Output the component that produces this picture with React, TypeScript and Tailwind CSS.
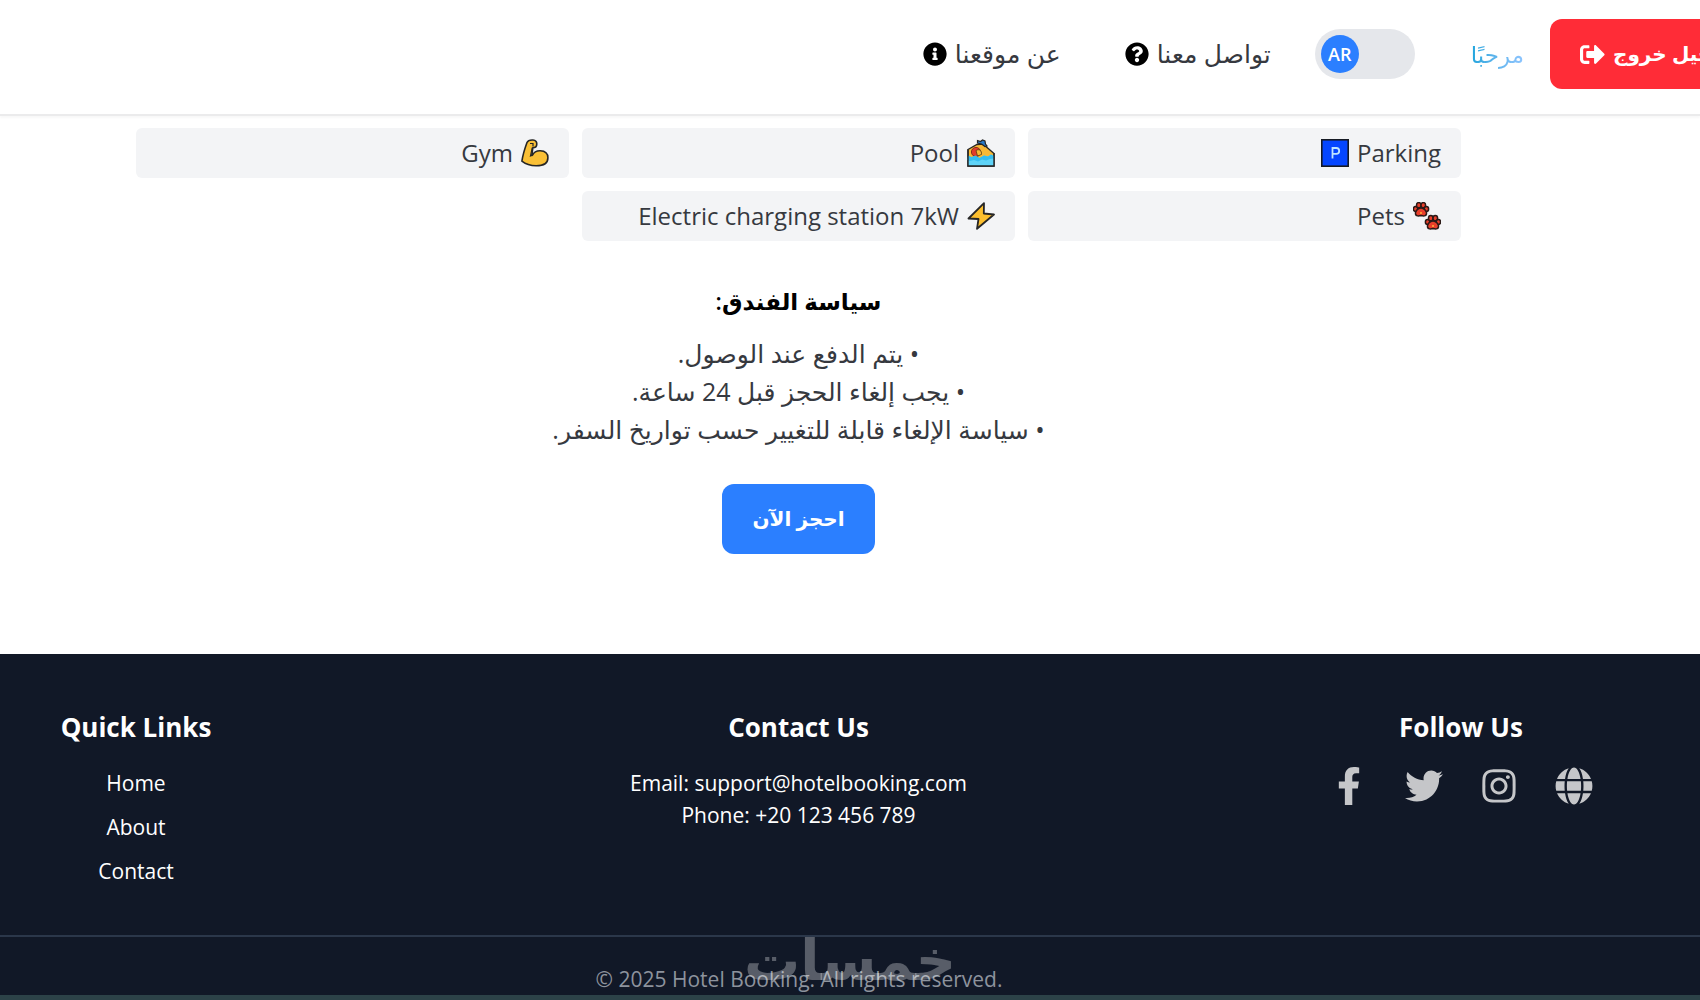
import React from "react";
import {
  FaFacebookF,
  FaGlobe,
  FaInfoCircle,
  FaInstagram,
  FaQuestionCircle,
  FaSignOutAlt,
  FaTwitter,
} from "react-icons/fa";

function Parking() {
  return (
    <svg viewBox="0 0 28 28" className="size-7 shrink-0" aria-hidden="true">
      <rect x="0.8" y="0.8" width="26.4" height="26.4" fill="#0546ff" stroke="#161a24" strokeWidth="1.6" />
      <path d="M11.5 19.5V9h3.8a2.8 2.8 0 0 1 0 5.8h-3.8" fill="none" stroke="#bfe6ff" strokeWidth="1.8" />
    </svg>
  );
}

function Pool() {
  return (
    <svg viewBox="0 0 28 28" className="size-7 shrink-0" aria-hidden="true">
      <path d="M1 10.5 10 5.500l6-.5 11 9.500V27H1z" fill="#f9b935" stroke="#262626" strokeWidth="1.4" />
      <path d="m10.500 1.500 3 1 2-1.500 2.500 1 .5 3 1.500 2-2 .5-3.500-2.500-4-1z" fill="#2879c8" stroke="#262626" strokeWidth="1.200" />
      <circle cx="9" cy="13" r="4.600" fill="#e23b2c" stroke="#6b2018" strokeWidth="0.800" />
      <path d="M9 11.500c3-2 6 0 5.500 4l-4 1.500z" fill="#f9b935" stroke="#5b3a12" strokeWidth="0.800" />
      <path d="M1 17.500l3.500 1 4-1.500 4 2 4.500-2.500 4 1 3-2 3 1.500V27H1z" fill="#5fd3f7" />
      <path d="M1 16.500l3.500 1.500 4-1.500 4 2.500 4.500-2.500 4 1 3-2 3 1.500v2.500l-4 .5-4 1.500-4-1-4 2-4-1.500-4 1-3-1z" fill="#35bdf0" />
      <path d="M1 10.500V27h26V14" fill="none" stroke="#262626" strokeWidth="1.400" />
    </svg>
  );
}

function Gym() {
  return (
    <svg viewBox="0 0 28 28" className="size-7 shrink-0" aria-hidden="true">
      <path
        d="M6 3.500C7 1.200 9 .8 12 1c2.600.2 3.800 1.500 3.800 4 0 2.500-1.300 3.800-4 3.800l-1 7.700c2.200-3.500 5-4.900 8.400-4.800 4.800.2 7.700 3 7.700 7 0 5.300-4.500 8.100-11.700 8.100-6 0-10.500-1.500-14.300-4.600C1.800 16 3.800 9.500 6 3.500z"
        fill="#fac036"
        stroke="#262626"
        strokeWidth="1.600"
        strokeLinejoin="round"
      />
      <path d="M9 4.500h3v3M11.300 8.500 9.500 17l3-1.500" fill="none" stroke="#262626" strokeWidth="1.200" />
    </svg>
  );
}

function Bolt() {
  return (
    <svg viewBox="0 0 28 28" className="size-7 shrink-0" aria-hidden="true">
      <path d="M17 1.200 1.500 16.500l10 .5-1.500 9.800L27 12.500l-10.200-1z" fill="#fcbf2f" stroke="#262626" strokeWidth="1.800" strokeLinejoin="round" />
    </svg>
  );
}

function Paw({ x, y }: { x: number; y: number }) {
  return (
    <g transform={`translate(${x} ${y})`} fill="#ea3f2b" stroke="#2b1917" strokeWidth="1.500">
      <ellipse cx="2.600" cy="7" rx="2.200" ry="2.500" />
      <ellipse cx="5.800" cy="3.200" rx="2.300" ry="2.600" />
      <ellipse cx="10.300" cy="3.200" rx="2.300" ry="2.600" />
      <ellipse cx="13.400" cy="7" rx="2.200" ry="2.500" />
      <path d="M8 6c3.200 0 6 3.500 5.500 6-.5 2.300-3 2.200-5.500 1.600-2.500.6-5 .7-5.500-1.600C2 9.500 4.800 6 8 6z" />
      <circle cx="8" cy="11" r="1" fill="#ffb43a" stroke="none" />
    </g>
  );
}

function Pets() {
  return (
    <svg viewBox="0 0 28 28" className="size-7 shrink-0" aria-hidden="true">
      <Paw x={0} y={0} />
      <Paw x={12} y={13} />
    </svg>
  );
}

const amenities = [
  { name: "Parking", icon: <Parking />, iconFirst: true },
  { name: "Pool", icon: <Pool /> },
  { name: "Gym", icon: <Gym /> },
  { name: "Pets", icon: <Pets /> },
  { name: "Electric charging station 7kW", icon: <Bolt /> },
];

const policies = [
  "يتم الدفع عند الوصول.",
  "يجب إلغاء الحجز قبل 24 ساعة.",
  "سياسة الإلغاء قابلة للتغيير حسب تواريخ السفر.",
];

const socials = [
  { label: "Facebook", icon: <FaFacebookF /> },
  { label: "Twitter", icon: <FaTwitter /> },
  { label: "Instagram", icon: <FaInstagram /> },
  { label: "Website", icon: <FaGlobe /> },
];

export default function App() {
  return (
    <div className="flex min-h-screen flex-col overflow-x-hidden bg-white font-['Open_Sans','Noto_Sans','DejaVu_Sans',sans-serif] text-2xl text-[#36393f]">
      <header className="flex h-[116px] items-center justify-end overflow-hidden border-b-2 border-[#ebebec] pb-[6px] shadow-[0_2px_2px_rgba(0,0,0,0.03)]">
        <nav className="flex items-center gap-16 text-[25px]">
          <a href="#about" className="flex items-center gap-2">
            <FaInfoCircle className="size-6 text-black" />
            <span dir="rtl">عن موقعنا</span>
          </a>
          <a href="#contact" className="flex items-center gap-2">
            <FaQuestionCircle className="size-6 text-black" />
            <span dir="rtl">تواصل معنا</span>
          </a>
        </nav>
        <button type="button" aria-label="Language" className="ml-11 flex h-[50px] w-[100px] shrink-0 items-center rounded-full bg-[#e5e7eb] px-[6px]">
          <span className="flex size-[38px] items-center justify-center rounded-full bg-[#2b7fff] text-lg font-semibold text-white">AR</span>
        </button>
        <span dir="rtl" className="ml-14 bg-linear-to-r from-[#1ba5dd] to-[#8ec5ff] bg-clip-text text-[23px] text-transparent">مرحبًا</span>
        <button type="button" className="-mr-14 ml-[26px] flex h-[70px] w-[206px] shrink-0 items-center gap-2 rounded-xl bg-[#ff2c37] px-[30px] text-xl font-bold whitespace-nowrap text-white">
          <FaSignOutAlt className="size-[25px] shrink-0" />
          <span dir="rtl">تسجيل خروج</span>
        </button>
      </header>

      <main className="flex flex-col items-center pt-3 pr-[239px] pb-[100px] pl-[136px]">
        <ul dir="rtl" className="grid w-full grid-cols-3 gap-[13px]">
          {amenities.map((item) => (
            <li key={item.name} className="flex h-[50px] items-center rounded-md bg-[#f3f4f6] px-5">
              <span dir="ltr" className="flex items-center gap-2">
                {item.iconFirst && item.icon}
                {item.name}
                {!item.iconFirst && item.icon}
              </span>
            </li>
          ))}
        </ul>
        <section dir="rtl" className="mt-[39px] flex flex-col items-center">
          <h2 className="text-[23px] leading-[42px] font-semibold text-black">سياسة الفندق:</h2>
          <ul className="mt-3 text-center text-[25px]">
            {policies.map((text) => (
              <li key={text} className="leading-[38px]">• {text}</li>
            ))}
          </ul>
          <button type="button" className="mt-9 h-[70px] rounded-xl bg-[#2b7fff] px-[30px] text-xl font-bold text-white">احجز الآن</button>
        </section>
      </main>

      <footer className="flex grow flex-col bg-[#111827] text-white">
        <div className="flex h-[283px] items-start justify-between border-b-2 border-[#2b374a] pt-[52px] pr-[111px] pl-2 text-center text-[21px]">
          <section className="w-64">
            <h3 className="text-[26px] leading-[42px] font-bold">Quick Links</h3>
            <ul className="mt-[19px] flex flex-col gap-3">
              {["Home", "About", "Contact"].map((link) => (
                <li key={link} className="leading-8">
                  <a href={`#${link.toLowerCase()}`}>{link}</a>
                </li>
              ))}
            </ul>
          </section>
          <section>
            <h3 className="text-[26px] leading-[42px] font-bold">Contact Us</h3>
            <p className="mt-[19px] leading-8">Email: support@hotelbooking.com</p>
            <p className="leading-8">Phone: +20 123 456 789</p>
          </section>
          <section className="w-64">
            <h3 className="text-[26px] leading-[42px] font-bold">Follow Us</h3>
            <div className="mt-[19px] flex justify-center gap-[37px] text-[38px] text-[#c5c6c9]">
              {socials.map((social) => (
                <a key={social.label} href={`#${social.label.toLowerCase()}`} aria-label={social.label}>
                  {social.icon}
                </a>
              ))}
            </div>
          </section>
        </div>
        <div className="relative flex h-[58px] items-end justify-center pr-[102px] text-[21px] leading-8 text-[#8d939d]">
          <p>© 2025 Hotel Booking. All rights reserved.</p>
          <span dir="rtl" className="absolute inset-x-0 top-0 flex justify-center text-[56px] leading-[42px] font-bold text-white/30">خمسات</span>
        </div>
        <div className="min-h-[5px] grow bg-[#2c4248]" />
      </footer>
    </div>
  );
}
